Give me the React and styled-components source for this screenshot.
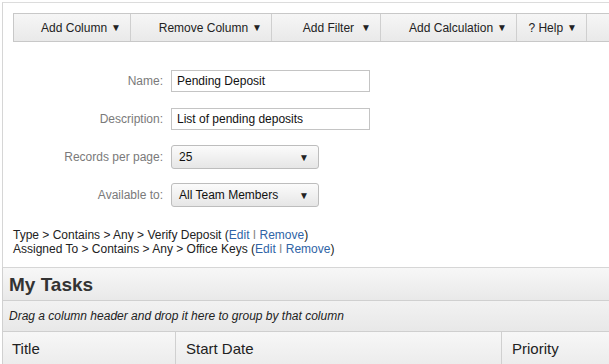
import React from 'react';
import styled, { createGlobalStyle } from 'styled-components';

const Global = createGlobalStyle`
  html, body {
    margin: 0;
    padding: 0;
    background: #fff;
    font-family: "Liberation Sans", Arial, sans-serif;
    overflow: hidden;
  }
`;

const Page = styled.div`
  width: 609px;
  height: 364px;
  overflow: hidden;
  padding: 2px 0 0 2px;
  box-sizing: border-box;
`;

const Panel = styled.div`
  border-left: 1px solid #d6d6d6;
  border-top: 1px solid #dcdcdc;
  padding: 10px 0 11px 10px;
`;

const Toolbar = styled.div`
  display: flex;
  height: 27px;
  border: 1px solid #c8c8c8;
  border-right: none;
  background: linear-gradient(#f6f6f6, #e9e9e9);
  width: 700px;
`;

const ToolButton = styled.div`
  width: ${p => p.w}px;
  flex: none;
  box-sizing: border-box;
  display: flex;
  align-items: center;
  justify-content: flex-end;
  padding-right: 9px;
  border-right: 1px solid #cfcfcf;
  font-size: 12px;
  color: #222;
  white-space: nowrap;
`;

const Arrow = styled.span`
  font-size: 10px;
  margin-left: ${p => p.gap || 4}px;
  color: #222;
`;

const Form = styled.div`
  display: grid;
  grid-template-columns: 150px auto;
  column-gap: 8px;
  row-gap: 14px;
  grid-auto-rows: 24px;
  align-items: center;
  margin-top: 27px;
`;

const Label = styled.div`
  text-align: right;
  font-size: 12px;
  color: #7a7a7a;
`;

const TextInput = styled.div`
  width: 199px;
  height: 22px;
  box-sizing: border-box;
  border: 1px solid #c4c4c4;
  background: #fff;
  padding: 0 5px;
  display: flex;
  align-items: center;
  font-size: 12px;
  color: #111;
`;

const Select = styled.div`
  width: 148px;
  height: 24px;
  box-sizing: border-box;
  border: 1px solid #bdbdbd;
  border-radius: 3px;
  background: linear-gradient(#fbfbfb, #e6e6e6);
  padding: 0 9px 0 7px;
  display: flex;
  align-items: center;
  justify-content: space-between;
  font-size: 12px;
  color: #111;
`;

const Filters = styled.div`
  margin-top: 21px;
  font-size: 12px;
  line-height: 14px;
  color: #222;
`;

const Link = styled.a`
  color: #2f64a6;
  text-decoration: none;
`;

const Sep = styled.span`
  color: #888;
`;

const Grid = styled.div`
  border-left: 1px solid #d0d0d0;
  border-top: 1px solid #d6d6d6;
`;

const GroupTitle = styled.div`
  height: 33px;
  display: flex;
  align-items: center;
  padding: 2px 0 0 6px;
  box-sizing: border-box;
  font-size: 19px;
  font-weight: bold;
  color: #333;
  background: linear-gradient(#f7f7f7, #e9e9e9);
  border-bottom: 1px solid #d0d0d0;
`;

const GroupBar = styled.div`
  height: 30px;
  display: flex;
  align-items: center;
  padding-left: 6px;
  font-size: 12px;
  font-style: italic;
  color: #222;
  background: linear-gradient(#f2f2f2, #e8e8e8);
  border-bottom: 1px solid #cfcfcf;
`;

const HeaderRow = styled.div`
  display: flex;
  height: 33px;
  background: linear-gradient(#f7f7f7, #ececec);
  border-bottom: 1px solid #cfcfcf;
`;

const HeaderCell = styled.div`
  width: ${p => p.w}px;
  flex: none;
  box-sizing: border-box;
  display: flex;
  align-items: center;
  padding-left: ${p => p.pl || 9}px;
  font-size: 15px;
  color: #222;
  border-right: 1px solid #d0d0d0;
`;

const tools = [
  { label: 'Add Column', w: 117 },
  { label: 'Remove Column', w: 141 },
  { label: 'Add Filter', w: 109, gap: 7 },
  { label: 'Add Calculation', w: 136 },
  { label: '? Help', w: 70 },
  { label: '', w: 120 },
];

const filters = [
  'Type > Contains > Any > Verify Deposit',
  'Assigned To > Contains > Any > Office Keys',
];

export default function App() {
  return (
    <Page>
      <Global />
      <Panel>
        <Toolbar>
          {tools.map((t, i) => (
            <ToolButton key={i} w={t.w}>
              {t.label}
              {t.label && <Arrow gap={t.gap}>▼</Arrow>}
            </ToolButton>
          ))}
        </Toolbar>
        <Form>
          <Label>Name:</Label>
          <TextInput>Pending Deposit</TextInput>
          <Label>Description:</Label>
          <TextInput>List of pending deposits</TextInput>
          <Label>Records per page:</Label>
          <Select>25<Arrow>▼</Arrow></Select>
          <Label>Available to:</Label>
          <Select>All Team Members<Arrow>▼</Arrow></Select>
        </Form>
        <Filters>
          {filters.map(f => (
            <div key={f}>
              {f} (<Link>Edit</Link> <Sep>I</Sep> <Link>Remove</Link>)
            </div>
          ))}
        </Filters>
      </Panel>
      <Grid>
        <GroupTitle>My Tasks</GroupTitle>
        <GroupBar>Drag a column header and drop it here to group by that column</GroupBar>
        <HeaderRow>
          <HeaderCell w={173}>Title</HeaderCell>
          <HeaderCell w={326} pl={10}>Start Date</HeaderCell>
          <HeaderCell w={200} pl={10}>Priority</HeaderCell>
        </HeaderRow>
      </Grid>
    </Page>
  );
}
